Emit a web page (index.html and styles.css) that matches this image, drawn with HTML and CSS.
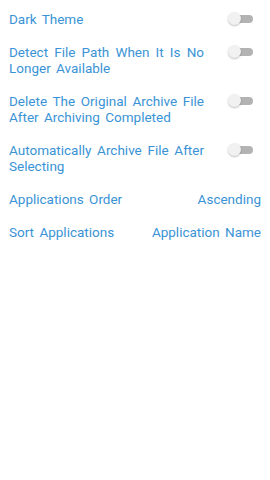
FILE: index.html
```html
<!DOCTYPE html>
<html lang="en">
<head>
  <meta charset="UTF-8">
  <meta name="viewport" content="width=device-width, initial-scale=1.0">
  <title>Settings</title>
  <link rel="stylesheet" href="styles.css">
</head>
<body>
  <div id="settings">
    <div class="row">
      <span class="label">Dark Theme</span>
      <span class="switch"></span>
    </div>
    <div class="row">
      <span class="label">Detect File Path When It Is No Longer Available</span>
      <span class="switch"></span>
    </div>
    <div class="row">
      <span class="label">Delete The Original Archive File After Archiving Completed</span>
      <span class="switch"></span>
    </div>
    <div class="row">
      <span class="label">Automatically Archive File After Selecting</span>
      <span class="switch"></span>
    </div>
    <div class="row">
      <span class="label">Applications Order</span>
      <span class="value">Ascending</span>
    </div>
    <div class="row">
      <span class="label">Sort Applications</span>
      <span class="value">Application Name</span>
    </div>
  </div>
</body>
</html>
```

FILE: styles.css
```css
body {
  margin: 0;
  background-color: #ffffff;
  font-family: Roboto, "Noto Sans", sans-serif;
  color: #3a93d6;
  font-size: 13.5px;
  line-height: 16px;
  word-spacing: 2px;
}

#settings {
  display: flex;
  flex-direction: column;
  gap: 17px;
  padding: 11px 9px 0 9px;
}

.row {
  display: flex;
  justify-content: space-between;
  align-items: flex-start;
}

.label {
  width: 195px;
  text-align: justify;
}

.value {
  white-space: nowrap;
}

.switch {
  position: relative;
  width: 25px;
  height: 16px;
  margin-right: 8px;
}

/* track */
.switch::before {
  content: "";
  position: absolute;
  left: 6px;
  top: 4px;
  width: 19px;
  height: 8px;
  border-radius: 4px;
  background-color: #b3b3b3;
}

/* thumb */
.switch::after {
  content: "";
  position: absolute;
  left: 0;
  top: 1px;
  width: 13px;
  height: 13px;
  border-radius: 50%;
  background-color: #f1f1f1;
  box-shadow: 0 1px 2px rgba(0, 0, 0, 0.25);
}
```
